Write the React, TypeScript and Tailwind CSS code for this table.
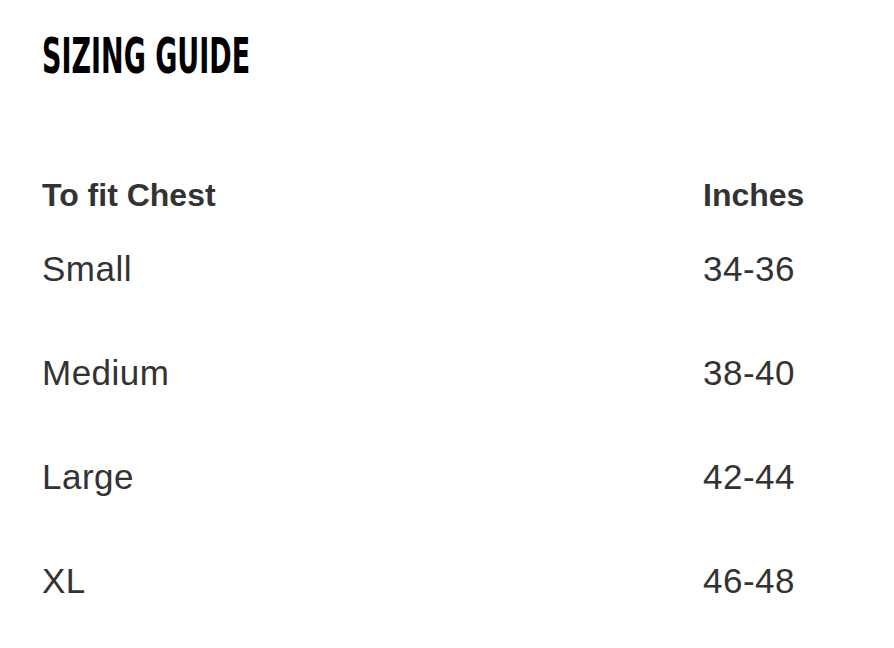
import React from "react";

const rows = [
  ["Small", "34-36"],
  ["Medium", "38-40"],
  ["Large", "42-44"],
  ["XL", "46-48"],
];

export default function App() {
  return (
    <div
      className="w-[894px] h-[648px] bg-white overflow-hidden pl-[42px] pt-[31px]"
      style={{ fontFamily: '"Liberation Sans", Arial, sans-serif' }}
    >
      <h1
        className="h-[50px] text-[50px] leading-[50px] font-bold text-black whitespace-nowrap origin-left scale-x-[0.6]"
        style={{ fontFamily: '"DejaVu Sans Condensed", "DejaVu Sans", sans-serif' }}
      >
        SIZING GUIDE
      </h1>
      <div className="mt-[98px] text-[#333]">
        <div className="flex h-[32px] text-[32px] leading-[32px] font-bold mb-[40px]">
          <div className="w-[661px]">To fit Chest</div>
          <div>Inches</div>
        </div>
        {rows.map(([s, v]) => (
          <div key={s} className="flex h-[104px] text-[35px] leading-[35px] tracking-[0.5px]">
            <div className="w-[661px]">{s}</div>
            <div>{v}</div>
          </div>
        ))}
      </div>
    </div>
  );
}
